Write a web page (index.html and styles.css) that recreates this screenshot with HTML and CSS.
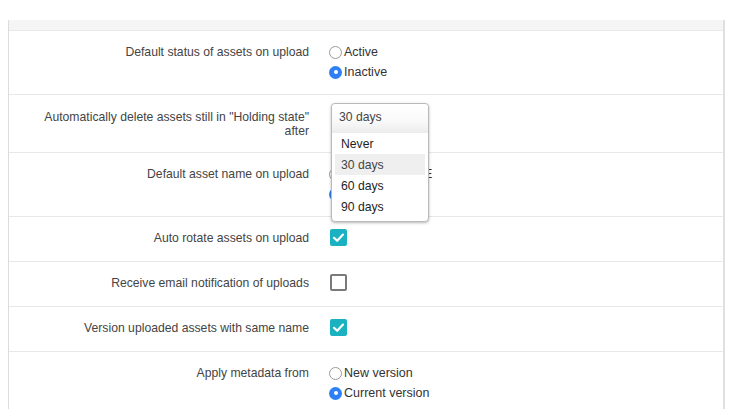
FILE: index.html
```html
<!DOCTYPE html>
<html>
<head>
<meta charset="utf-8">
<link rel="stylesheet" href="styles.css">
</head>
<body>
<div class="panel">
  <div class="panel-head"></div>

  <div class="row">
    <div class="label">Default status of assets on upload</div>
    <div class="control">
      <label class="radio"><span class="dot"></span>Active</label>
      <label class="radio"><span class="dot on"></span>Inactive</label>
    </div>
  </div>

  <div class="row">
    <div class="label two-line">Automatically delete assets still in "Holding state" after</div>
    <div class="control">
      <div class="select-wrap">
        <div class="popup">
          <div class="popup-head">30 days</div>
          <ul class="popup-list">
            <li>Never</li>
            <li class="hl">30 days</li>
            <li>60 days</li>
            <li>90 days</li>
          </ul>
        </div>
      </div>
    </div>
  </div>

  <div class="row">
    <div class="label">Default asset name on upload</div>
    <div class="control">
      <label class="radio"><span class="dot"></span>Use FILENAME</label>
      <label class="radio"><span class="dot on"></span>Use title</label>
    </div>
  </div>

  <div class="row cb-row">
    <div class="label">Auto rotate assets on upload</div>
    <div class="control">
      <span class="check on"><svg viewBox="0 0 17 17" width="17" height="17"><polyline points="4,8.8 7.2,11.8 13,5.6" fill="none" stroke="#fff" stroke-width="2.2" stroke-linecap="round" stroke-linejoin="round"/></svg></span>
    </div>
  </div>

  <div class="row cb-row">
    <div class="label">Receive email notification of uploads</div>
    <div class="control">
      <span class="check"></span>
    </div>
  </div>

  <div class="row cb-row">
    <div class="label">Version uploaded assets with same name</div>
    <div class="control">
      <span class="check on"><svg viewBox="0 0 17 17" width="17" height="17"><polyline points="4,8.8 7.2,11.8 13,5.6" fill="none" stroke="#fff" stroke-width="2.2" stroke-linecap="round" stroke-linejoin="round"/></svg></span>
    </div>
  </div>

  <div class="row last">
    <div class="label">Apply metadata from</div>
    <div class="control">
      <label class="radio"><span class="dot"></span>New version</label>
      <label class="radio"><span class="dot on"></span>Current version</label>
    </div>
  </div>
</div>
</body>
</html>
```

FILE: styles.css
```css
html, body {
  margin: 0;
  padding: 0;
  background: #fff;
}
body {
  font-family: "Liberation Sans", Arial, Helvetica, sans-serif;
  font-size: 12.2px;
  color: #444;
  overflow: hidden;
}
.panel {
  margin: 20px 0 0 8px;
  width: 714px;
  border-left: 1px solid #dcdcdc;
  border-right: 2px solid #e0e0e0;
  height: 400px;
}
.panel-head {
  height: 10px;
  background: #f5f5f5;
  border-bottom: 1px solid #e8e8e8;
}
.row {
  display: grid;
  grid-template-columns: 300px 1fr;
  column-gap: 20px;
  padding: 11px 0 12px;
  border-bottom: 1px solid #e8e8e8;
  line-height: 20px;
  align-items: start;
}
.row.last {
  border-bottom: none;
}
.label {
  text-align: right;
  color: #444;
  padding-left: 22px;
}
.label.two-line {
  line-height: 14px;
  margin-top: 4px;
}
.cb-row .label {
  line-height: 21px;
}
.control {
  display: flex;
  flex-direction: column;
  align-items: flex-start;
}
.radio {
  display: flex;
  align-items: center;
  gap: 2px;
  color: #333;
  font-size: 12.5px;
  height: 20px;
}
.dot {
  box-sizing: border-box;
  width: 13px;
  height: 13px;
  border-radius: 50%;
  border: 1px solid #9a9a9a;
  background: #fff;
  position: relative;
}
.dot.on {
  border: none;
  background: #2f80f6;
}
.dot.on::after {
  content: "";
  position: absolute;
  left: 4.5px;
  top: 4.5px;
  width: 4px;
  height: 4px;
  border-radius: 50%;
  background: #fff;
}
.check {
  box-sizing: border-box;
  display: block;
  width: 17px;
  height: 17px;
  margin: 1px 0 3px 1px;
  border: 2px solid #7a7a7a;
  border-radius: 2px;
  background: #fff;
}
.check.on {
  border: none;
  background: #1ab2c1;
}
.check svg {
  display: block;
}
.select-wrap {
  position: relative;
  height: 34px;
  width: 100px;
}
.popup {
  position: absolute;
  left: 2px;
  top: -3px;
  width: 96px;
  border: 1px solid #b9b9b9;
  border-radius: 4px;
  background: #fff;
  box-shadow: 0 1px 3px rgba(0, 0, 0, 0.28);
  z-index: 5;
}
.popup-head {
  height: 29px;
  box-sizing: border-box;
  padding: 3px 0 0 7px;
  line-height: 20px;
  color: #444;
  border-radius: 4px 4px 0 0;
  background: linear-gradient(#ffffff 0%, #fafafa 55%, #ececec 100%);
}
.popup-list {
  list-style: none;
  margin: 0;
  padding: 0 3px 4px;
}
.popup-list li {
  height: 21px;
  line-height: 22px;
  padding-left: 6px;
  color: #1e1e1e;
}
.popup-list li.hl {
  background: #efefef;
  color: #444;
}
```
